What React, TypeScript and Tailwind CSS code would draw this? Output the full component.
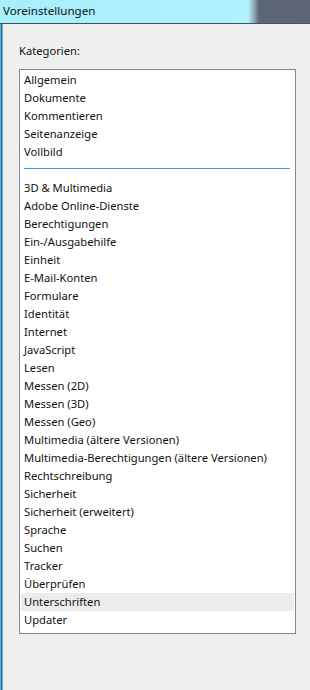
import React from "react";

const group1 = ["Allgemein", "Dokumente", "Kommentieren", "Seitenanzeige", "Vollbild"];
const group2 = [
  "3D & Multimedia",
  "Adobe Online-Dienste",
  "Berechtigungen",
  "Ein-/Ausgabehilfe",
  "Einheit",
  "E-Mail-Konten",
  "Formulare",
  "Identität",
  "Internet",
  "JavaScript",
  "Lesen",
  "Messen (2D)",
  "Messen (3D)",
  "Messen (Geo)",
  "Multimedia (ältere Versionen)",
  "Multimedia-Berechtigungen (ältere Versionen)",
  "Rechtschreibung",
  "Sicherheit",
  "Sicherheit (erweitert)",
  "Sprache",
  "Suchen",
  "Tracker",
  "Überprüfen",
  "Unterschriften",
  "Updater",
];

function Row({ label, selected }: { label: string; selected?: boolean }) {
  return (
    <div
      className={
        "h-[18px] leading-[18px] pl-[3px] whitespace-nowrap " +
        (selected ? "bg-[#ececec]" : "")
      }
    >
      {label}
    </div>
  );
}

export default function App() {
  return (
    <div
      className="w-[310px] h-[690px] overflow-hidden flex flex-col bg-[#efefef] text-[11.2px] text-[#111]"
      style={{ fontFamily: '"Noto Sans", "Segoe UI", sans-serif' }}
    >
      <div className="h-[23px] flex shrink-0 bg-[linear-gradient(to_right,#a8eefb_0px,#aef2fd_240px,#b6f3fb_248px,#8fa9b6_254px,#5c6678_259px,#5a6475_310px)]">
        <div className="pl-[3px] leading-[22px] text-[11.6px]">Voreinstellungen</div>
      </div>
      <div className="h-[1px] shrink-0 bg-[#3f5560]" />
      <div className="flex-1 flex">
        <div className="w-[3px] shrink-0 bg-[linear-gradient(to_right,#4fb3dc_0px,#4fb3dc_1px,#1d6f9a_1px,#1d6f9a_2px,#8aa3ad_2px)]" />
        <div className="flex-1 flex flex-col pl-[16px] pr-[14px]">
          <div className="h-[18px] leading-[18px] mt-[18px]">Kategorien:</div>
          <div className="mt-[9px] h-[565px] border border-[#828790] bg-white pt-[1px] px-[1px]">
            {group1.map((l) => (
              <Row key={l} label={l} />
            ))}
            <div className="h-[18px] flex items-start pt-[7px] pl-[3px] pr-[4px]">
              <div className="h-[1px] w-full bg-[#3399ee]" />
            </div>
            {group2.map((l) => (
              <Row key={l} label={l} selected={l === "Unterschriften"} />
            ))}
          </div>
        </div>
      </div>
    </div>
  );
}
